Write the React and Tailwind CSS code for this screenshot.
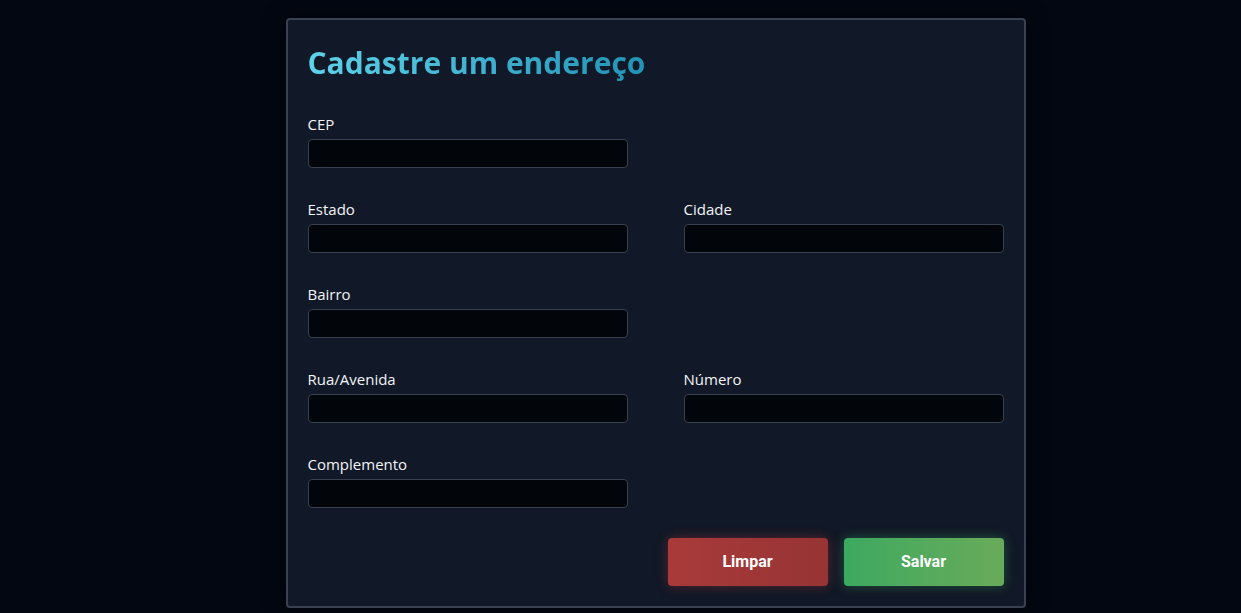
import React from 'react';

function Field({ label, className = '' }) {
    return (
        <div className={'flex flex-col ' + className}>
            <label className="text-[15px] leading-[20px] text-gray-100 mb-[5px]">{label}</label>
            <input
                type="text"
                className="h-[29px] w-full bg-[#02050a] border border-[#374151] rounded-[4px] px-2 text-white text-sm outline-none"
            />
        </div>
    );
}

export default function App() {
    return (
        <div className="min-h-screen bg-[#030711] flex justify-center pl-[70px] pt-[18px] font-['Open_Sans',sans-serif]">
            <div className="w-[740px] h-[590px] bg-[#111827] border-2 border-[#3a4252] rounded-[4px] px-[20px] pt-[23px] pb-[20px] shadow-[0_0_20px_rgba(0,0,0,0.5)]">
                <h2 className="text-[30px] leading-[40px] font-bold bg-gradient-to-r from-[#5dd3ea] to-[#2093b6] bg-clip-text text-transparent w-fit mb-[31px]">
                    Cadastre um endereço
                </h2>

                <div className="grid grid-cols-2 gap-x-[56px] gap-y-[31px]">
                    <Field label="CEP" />
                    <div />
                    <Field label="Estado" />
                    <Field label="Cidade" />
                    <Field label="Bairro" />
                    <div />
                    <Field label="Rua/Avenida" />
                    <Field label="Número" />
                    <Field label="Complemento" />
                    <div />
                </div>

                <div className="flex justify-end gap-4 mt-[30px] font-['Roboto',sans-serif]">
                    <button className="w-[160px] h-[48px] rounded-[4px] bg-gradient-to-r from-[#a93a3a] to-[#973434] text-white font-bold text-[16px] shadow-[0_0_12px_rgba(220,60,60,0.35)]">
                        Limpar
                    </button>
                    <button className="w-[160px] h-[48px] rounded-[4px] bg-gradient-to-r from-[#3ba960] to-[#68ab5a] text-white font-bold text-[16px] shadow-[0_0_12px_rgba(70,200,100,0.35)]">
                        Salvar
                    </button>
                </div>
            </div>
        </div>
    );
}
